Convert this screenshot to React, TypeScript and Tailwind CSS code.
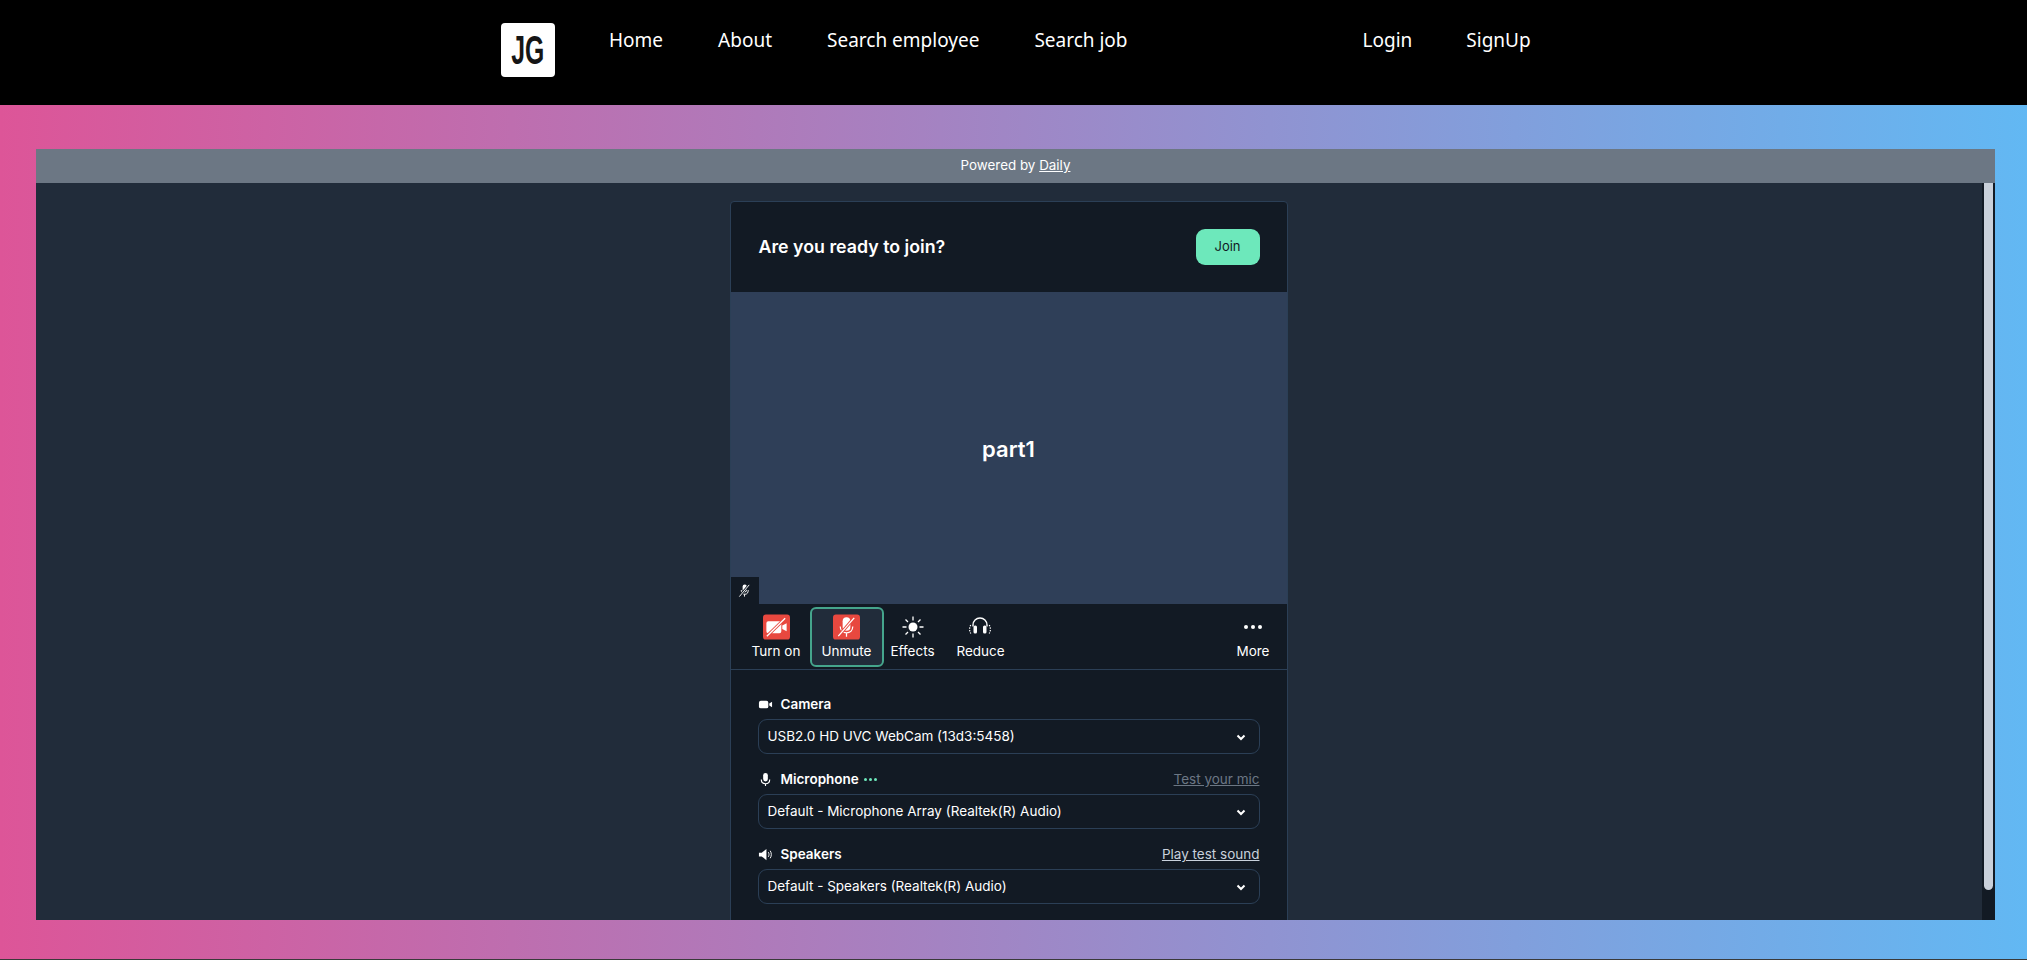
const VideoOff = () => (
  <svg viewBox="0 0 28 26" className="w-full h-full">
    <rect x="0" y="0" width="28" height="26" rx="3" fill="#e8483f" />
    <path d="M3.500 9a2 2 0 0 1 2-2H17a2 2 0 0 1 2 2v8.500a2 2 0 0 1-2 2H5.500a2 2 0 0 1-2-2z" fill="#fff" />
    <path d="M20 11.500l4.500-2.500v8.500L20 15z" fill="#fff" />
    <path d="M4 22.500L23 4" stroke="#e8483f" strokeWidth="3.200" />
    <path d="M4 22.500L23 4" stroke="#fff" strokeWidth="1.400" />
  </svg>
);

const MicOff = () => (
  <svg viewBox="0 0 28 26" className="w-full h-full">
    <rect x="0" y="0" width="28" height="26" rx="3" fill="#e8483f" />
    <rect x="10" y="3" width="8" height="14" rx="4" fill="#fff" />
    <path d="M7.500 12.500c0 4.200 3 6.500 6.500 6.500s6.500-2.300 6.500-6.500M14 19v4" fill="none" stroke="#fff" strokeWidth="1.300" />
    <path d="M5.500 22.500L22 3.500" stroke="#e8483f" strokeWidth="3.200" />
    <path d="M5.500 22.500L22 3.500" stroke="#fff" strokeWidth="1.400" />
  </svg>
);

const Sun = () => (
  <svg viewBox="0 0 26 26" className="w-[26px] h-[26px]" stroke="#fff" strokeWidth="1.300" fill="none">
    <circle cx="13" cy="13" r="4.500" fill="#fff" stroke="none" />
    <path d="M13 2.500v4M13 19.500v4M2.500 13h4M19.500 13h4M5.500 5.500l2.500 2.500M18 18l2.500 2.500M5.500 20.500L8 18M18 8l2.500-2.500" />
  </svg>
);

const Headphones = () => (
  <svg viewBox="0 0 26 26" className="w-[26px] h-[26px]" fill="none" stroke="#fff">
    <path d="M6 12.500V11a7 7 0 0 1 14 0v1.500" strokeWidth="1.400" />
    <rect x="6.500" y="11.500" width="3.500" height="8" rx="1.500" fill="#fff" stroke="none" />
    <rect x="16" y="11.500" width="3.500" height="8" rx="1.500" fill="#fff" stroke="none" />
    <path d="M3.800 11c-1.600 2.500-1.600 6 0 8.500M22.200 11c1.600 2.500 1.600 6 0 8.500" strokeWidth="1.200" strokeDasharray="1.300 1.300" />
  </svg>
);

const Chevron = () => (
  <svg viewBox="0 0 12 12" className="w-3 h-3" fill="none" stroke="#fff" strokeWidth="2">
    <path d="M2.500 4.500L6 8l3.500-3.500" />
  </svg>
);

const ToolButton = ({ icon, label }: { icon: React.ReactNode; label: string }) => (
  <div className="flex flex-col items-center">
    <div className="h-[26px] flex items-center justify-center">{icon}</div>
    <span className="mt-[3px] text-[13.5px] leading-[16px] text-white">{label}</span>
  </div>
);

const DeviceSelect = ({ value }: { value: string }) => (
  <div className="h-[35px] mt-[6px] rounded-[9px] border border-[#2b3f56] pl-[9px] pr-[12px] flex items-center justify-between text-[13.5px] text-white">
    <span>{value}</span>
    <Chevron />
  </div>
);

const links = ['Home', 'About', 'Search employee', 'Search job'];

export default function App() {
  return (
    <div className="h-screen flex flex-col overflow-hidden bg-black font-['Noto_Sans',sans-serif]">
      <nav className="h-[105px] shrink-0 bg-black pl-[501px] pt-[23px] flex items-start">
        <div className="w-[54px] h-[54px] rounded-[4px] bg-white flex items-center justify-center text-[40px] font-bold text-[#151515] font-['Liberation_Sans',sans-serif]">
          <span className="inline-block scale-x-[0.62]">JG</span>
        </div>
        <ul className="ml-[54px] pt-[4px] flex gap-[55px] text-[19px] leading-[26px] text-white">
          {links.map((l) => (
            <li key={l}>{l}</li>
          ))}
        </ul>
        <ul className="ml-[235px] pt-[4px] flex gap-[54px] text-[19px] leading-[26px] text-white">
          <li>Login</li>
          <li>SignUp</li>
        </ul>
      </nav>

      <main className="h-[854px] shrink-0 bg-linear-to-r/srgb from-[#dd5598] to-[#62b8f3] pr-[32px] pt-[44px] pb-[39px] pl-[36px]">
        <div className="h-full flex flex-col">
          <div className="h-[34px] shrink-0 pb-[1px] bg-[#6c7784] flex items-center justify-center text-[13.4px] text-white font-['Inter',sans-serif]">
            Powered by&nbsp;<span className="underline">Daily</span>
          </div>
          <div className="flex-1 min-h-0 flex bg-[#212c3a] font-['Inter',sans-serif]">
            <div className="flex-1 min-w-0 overflow-hidden pt-[18px] flex justify-center">
              <div className="w-[558px] h-[760px] shrink-0 ml-[-1px] rounded-t-[4px] border border-[#2b3f56] bg-[#121a24]">
                <div className="h-[90px] pl-[28px] pr-[27px] flex items-center justify-between">
                  <h1 className="text-[17.8px] font-semibold text-white">Are you ready to join?</h1>
                  <button className="w-[64px] h-[36px] rounded-[9px] bg-[#6de8bb] text-[13px] text-[#121a24]">Join</button>
                </div>

                <div className="relative h-[312px] pt-[3px] bg-[#2f3f58] flex items-center justify-center">
                  <span className="text-[22px] font-semibold text-white">part1</span>
                  <div className="absolute left-0 bottom-0 w-[28px] h-[27px] bg-[#121a24] flex items-center justify-center">
                    <svg viewBox="0 0 16 16" className="w-[15px] h-[15px]" fill="none" stroke="#fff">
                      <rect x="6" y="1.500" width="4.500" height="8.500" rx="2.200" fill="#fff" stroke="none" />
                      <path d="M4.500 7.500c0 3 1.800 4.500 4 4.500s3.500-1.500 3.500-4.500M8 12v2.500" strokeWidth="1" />
                      <path d="M2.500 14.500L13 2" stroke="#121a24" strokeWidth="2.500" />
                      <path d="M2.500 14.500L13 2" strokeWidth="1" />
                    </svg>
                  </div>
                </div>

                <div className="h-[66px] border-b border-[#2b3f56] pl-[21px] pr-[17px] flex items-center">
                  <div className="w-[49px] flex justify-center">
                    <ToolButton icon={<div className="w-[27px] h-[26px]"><VideoOff /></div>} label="Turn on" />
                  </div>
                  <div className="ml-[9px] w-[74px] h-[60px] rounded-[6px] border-2 border-[#45a58c] bg-[#212c3a] flex justify-center items-center">
                    <ToolButton icon={<div className="w-[27px] h-[26px]"><MicOff /></div>} label="Unmute" />
                  </div>
                  <div className="ml-[7px] w-[44px] flex justify-center">
                    <ToolButton icon={<Sun />} label="Effects" />
                  </div>
                  <div className="ml-[21px] w-[50px] flex justify-center">
                    <ToolButton icon={<Headphones />} label="Reduce" />
                  </div>
                  <div className="ml-auto flex justify-center">
                    <ToolButton
                      icon={
                        <div className="flex gap-[3px]">
                          <span className="w-[4px] h-[4px] rounded-full bg-white" />
                          <span className="w-[4px] h-[4px] rounded-full bg-white" />
                          <span className="w-[4px] h-[4px] rounded-full bg-white" />
                        </div>
                      }
                      label="More"
                    />
                  </div>
                </div>

                <div className="px-[27px] pt-[25px]">
                  <div className="h-[18px] flex items-center text-[13.5px] font-semibold text-white">
                    <svg viewBox="0 0 16 16" className="w-[15px] h-[15px] mr-[8px]" fill="#fff">
                      <rect x="1" y="4" width="10" height="8" rx="2" />
                      <path d="M12 7l3-2v6l-3-2z" />
                    </svg>
                    Camera
                  </div>
                  <DeviceSelect value="USB2.0 HD UVC WebCam (13d3:5458)" />

                  <div className="h-[18px] mt-[16px] flex items-center text-[13.5px] font-semibold text-white">
                    <svg viewBox="0 0 16 16" className="w-[15px] h-[15px] mr-[8px]" fill="none" stroke="#fff">
                      <rect x="5.500" y="1" width="5" height="9" rx="2.500" fill="#fff" stroke="none" />
                      <path d="M3.500 8c0 3 2 4.500 4.500 4.500s4.500-1.500 4.500-4.500M8 12.500V15" strokeWidth="1.200" />
                    </svg>
                    Microphone
                    <span className="ml-[5px] flex gap-[2px]">
                      <span className="w-[3px] h-[3px] rounded-full bg-[#6de8bb]" />
                      <span className="w-[3px] h-[3px] rounded-full bg-[#6de8bb]" />
                      <span className="w-[3px] h-[3px] rounded-full bg-[#6de8bb]" />
                    </span>
                    <span className="ml-auto text-[13.5px] font-normal text-[#6c7784] underline">Test your mic</span>
                  </div>
                  <DeviceSelect value="Default - Microphone Array (Realtek(R) Audio)" />

                  <div className="h-[18px] mt-[16px] flex items-center text-[13.5px] font-semibold text-white">
                    <svg viewBox="0 0 16 16" className="w-[15px] h-[15px] mr-[8px]" fill="none" stroke="#fff">
                      <path d="M1 6h3l5-4v12l-5-4H1z" fill="#fff" stroke="none" />
                      <path d="M11 5.500c1 1.500 1 3.500 0 5M13 4c1.600 2.500 1.600 5.500 0 8" strokeWidth="1" />
                    </svg>
                    Speakers
                    <span className="ml-auto text-[13.5px] font-normal text-[#c8d1dc] underline">Play test sound</span>
                  </div>
                  <DeviceSelect value="Default - Speakers (Realtek(R) Audio)" />
                </div>
              </div>
            </div>
            <div className="w-[13px] shrink-0 bg-[#121a24] px-[2px]">
              <div className="h-[707px] rounded-b-full bg-[#c9d0da]" />
            </div>
          </div>
        </div>
      </main>
      <div className="h-[1px] shrink-0 bg-[#3a3a3a]" />
    </div>
  );
}
